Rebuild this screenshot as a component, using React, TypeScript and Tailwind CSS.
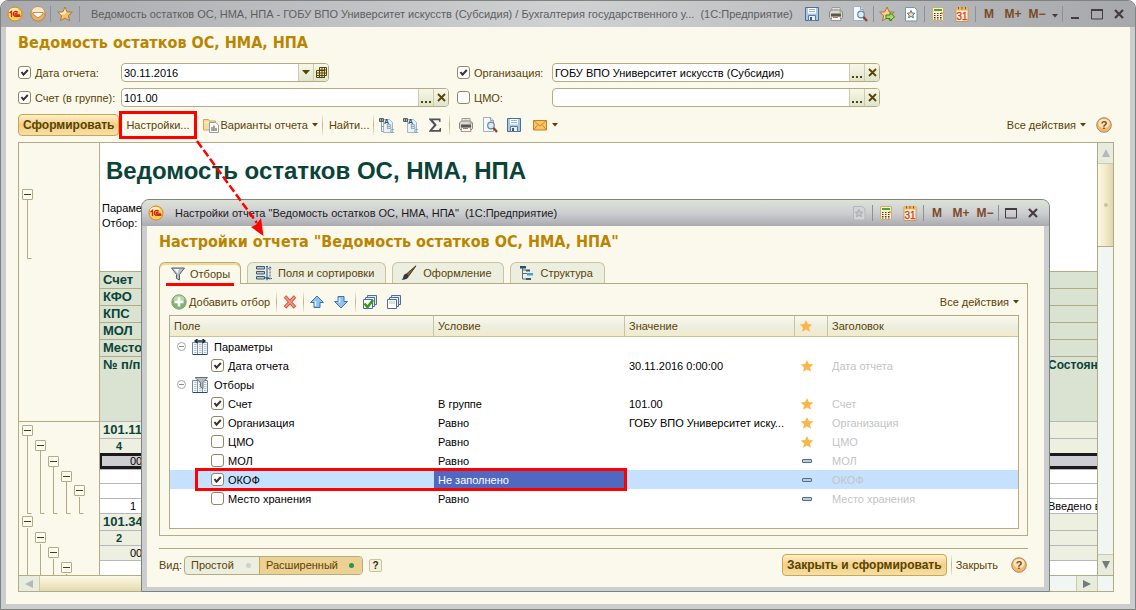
import React from "react";

type Kids = { children?: React.ReactNode };

/* ---------- icons ---------- */

function Svg({ children, w = 16, h = 16 }: Kids & { w?: number; h?: number }) {
    return (
        <svg width={w} height={h} viewBox={`0 0 ${w} ${h}`} aria-hidden="true" className="shrink-0">
            {children}
        </svg>
    );
}

const STAR = "M8 1l2.1 4.8 5.2.4-4 3.4 1.3 5.1L8 12l-4.6 2.7 1.3-5.1-4-3.4 5.2-.4z";

function LogoIcon() {
    return (
        <Svg>
            <circle cx="8" cy="8" r="7" fill="#ffd84a" stroke="#d9812c" />
            <ellipse cx="7" cy="5" rx="5" ry="3" fill="#fff3b0" />
            <path d="M2.5 7l2-1.6V11M10.8 6.4A2.5 2.5 0 1 0 9 10.4h4.5M10 8a1 1 0 1 0-.8 1h4" fill="none" stroke="#d8231c" strokeWidth="1.3" />
        </Svg>
    );
}

function RoundMenuIcon() {
    return (
        <Svg>
            <circle cx="8" cy="8" r="7.2" fill="#eeb058" stroke="#a98560" />
            <path d="M1.500 6.500a6.600 6.600 0 0 1 13 0z" fill="#fbe6bd" />
            <path d="M3 6.500h10v1.500L8 12 3 8z" fill="#fff" stroke="#a96d28" strokeWidth=".7" />
        </Svg>
    );
}

function StarIcon({ size = 16 }: { size?: number }) {
    return (
        <svg width={size} height={size} viewBox="0 0 16 16" aria-hidden="true">
            <path d={STAR} fill="#fdb54a" />
        </svg>
    );
}

function TitleStarIcon() {
    return (
        <Svg>
            <path d={STAR} fill="#fcc06a" stroke="#a9752e" strokeWidth=".9" />
            <path d="M8 3l1.200 3.500L8 8.500 4 8.500 2.500 7l4-.5z" fill="#fff0c0" />
        </Svg>
    );
}

function SaveIcon() {
    return (
        <Svg>
            <path d="M1.5 1.5h13v13h-13z" fill="#a9c8e4" stroke="#47719a" />
            <path d="M4 2h8v5.5H4z" fill="#fff" />
            <path d="M5 3.5h6M5 5.5h6" stroke="#9bb4cc" />
            <path d="M4.5 9.5h7v5h-7z" fill="#e9f0f5" stroke="#5d7b98" />
            <path d="M6 11h2v3H6z" fill="#3e5d7d" />
        </Svg>
    );
}

function PrinterIcon() {
    return (
        <Svg>
            <path d="M4 5V1.500h8V5" fill="#fff" stroke="#9a9a9a" />
            <path d="M5.500 3h5" stroke="#b6b6b6" />
            <path d="M1.500 6l2-2h9l2 2v5.500l-1.500 1.500H3l-1.500-1.500z" fill="#dcdad4" stroke="#8a877f" />
            <path d="M3 7.500h10v3H3z" fill="#5c5650" />
            <path d="M4 10.500h8l1 4H3z" fill="#fff" stroke="#8a867e" strokeWidth=".8" />
            <path d="M5 11.500h5" stroke="#d16a4a" />
            <path d="M11.500 6h2" stroke="#4fa23f" />
        </Svg>
    );
}

function PreviewIcon() {
    return (
        <Svg>
            <path d="M1.500.5h7l3 3v11h-10z" fill="#f5f9fc" stroke="#9db2c4" />
            <path d="M8.500.5v3h3" fill="#d4e2ee" stroke="#8ea5b8" />
            <circle cx="9" cy="8.500" r="3.300" fill="#d6ecf8" stroke="#6e8496" strokeWidth="1.200" />
            <path d="M11.500 11l3.500 4" stroke="#8a4a26" strokeWidth="2.400" />
        </Svg>
    );
}

function StarArrowIcon() {
    return (
        <Svg>
            <path d={STAR} fill="#fcd08a" stroke="#a4702c" strokeWidth=".9" />
            <path d="M7 9h4V6.500l4.500 4.300-4.500 4.200v-2.500H7z" fill="#a4dc6b" stroke="#3c7f1c" />
        </Svg>
    );
}

function DocStarIcon({ faded }: { faded?: boolean }) {
    const line = faded ? "#a9abae" : "#56748f";
    return (
        <Svg>
            <path d="M2.500 1.500h9l2.500 2.500v11H2.500z" fill={faded ? "#d2d4d5" : "#fff"} stroke={faded ? "#b4b6b9" : "#7892a8"} />
            <path d="M8 4.500l1.100 2.500 2.700.3-2 1.800.6 2.700L8 10.400l-2.400 1.400.6-2.700-2-1.800 2.700-.3z" fill={faded ? "#c5c7c9" : "#fbd9a0"} stroke={line} />
        </Svg>
    );
}

function CalcIcon() {
    return (
        <Svg>
            <path d="M2.500 1.500h11v13h-11z" fill="#fbeecb" stroke="#cfae74" />
            <path d="M4 3h8v2H4z" fill="#4aa43c" />
            <path d="M4 7.500h8M4 9.500h8M4 11.500h8M4 13h8" stroke="#3d3a34" strokeWidth="1.200" strokeDasharray="1.500 1.500" />
            <path d="M11 6.500h1.500V8H11z" fill="#d8501e" />
        </Svg>
    );
}

function CalendarIcon() {
    return (
        <Svg>
            <path d="M2 2h12v13.500H2z" fill="#fff6e0" stroke="#c69a5c" />
            <path d="M2 1.500h12V4.500H2z" fill="#f4b455" />
            <path d="M4.500 1v2.500M8 1v2.500M11.500 1v2.500" stroke="#8d5a22" />
            <text x="8" y="14" textAnchor="middle" fontSize="10" fill="#e0331a" stroke="#e0331a" strokeWidth=".3">31</text>
        </Svg>
    );
}

function FolderIcon() {
    return (
        <Svg>
            <path d="M.5 2.500h5l1 1.500h6v9H.5z" fill="#f7dc9c" stroke="#c9a75f" />
            <path d="M1.500 5.500h10" stroke="#fdedc2" />
            <path d="M6.500 5.500h6l3 2.500v7.500h-9z" fill="#fff" stroke="#8aa0b5" />
            <path d="M9 10v4" stroke="#5794cf" strokeWidth="1.500" />
            <path d="M11 8.500V14" stroke="#d85c3c" strokeWidth="1.500" />
            <path d="M13 11v3" stroke="#5aa94a" strokeWidth="1.500" />
        </Svg>
    );
}

function GroupIcon({ collapsed }: { collapsed?: boolean }) {
    return (
        <Svg>
            <path d="M4.500 2.500h6l3 3v10h-9z" fill="#eaf1f7" stroke="#a3b7c8" />
            <path d="M.5 1.500h4v3h-4zM.5 3h4M2.500 1.500v3" fill="none" stroke="#4a4f57" strokeWidth=".9" />
            {!collapsed && <path d="M2.500 5v9.500h2M2.500 9.500h2" fill="none" stroke="#8aa0b3" />}
            <text x="5" y="6.500" fontSize="7" fontWeight="700" fill="#1f5276">A</text>
            <text x="7.500" y="11.500" fontSize="7" fontWeight="700" fill="#8ea5b8">B</text>
            <text x="11" y="16" fontSize="6" fontWeight="700" fill="#8097a9">C</text>
        </Svg>
    );
}

function SigmaIcon() {
    return (
        <Svg>
            <path d="M2 1.500h11.500V5h-1l-.8-1.700H5.800L9.800 8l-4.500 5h6.700l1-2h1v3.800H2V14l5-6-5-5.700z" fill="#4d5257" />
        </Svg>
    );
}

function MailIcon() {
    return (
        <Svg>
            <path d="M1.500 3.500h13v9.500h-13z" fill="#fbc566" stroke="#c47f22" />
            <path d="M1.500 3.500L8 9l6.500-5.500M1.500 13L6 7.500M14.500 13L10 7.500" fill="none" stroke="#c98a34" />
        </Svg>
    );
}

function HelpIcon() {
    return (
        <Svg>
            <circle cx="8" cy="8" r="7.300" fill="#f9b765" stroke="#a08a70" />
            <ellipse cx="8" cy="6.500" rx="5.500" ry="4.500" fill="#fde6bd" />
            <text x="8" y="12" textAnchor="middle" fontSize="11" fontWeight="700" fill="#7a4a12">?</text>
        </Svg>
    );
}

function FunnelIcon() {
    return (
        <Svg>
            <path d="M1.500 2h13L9.500 8.500V14l-3-1.500v-4z" fill="#b9bfc4" stroke="#55606a" />
            <path d="M4 3h5L7.500 7.500z" fill="#f4f6f7" />
        </Svg>
    );
}

function FieldsIcon() {
    return (
        <Svg>
            <path d="M.5 1.500h8V4h-8zM.5 6.500h8V9h-8zM.5 11.500h8V14h-8z" fill="#b7cbdc" stroke="#45586a" />
            <path d="M11 14V2M9.500 12l1.500 2.500 1.500-2.500" fill="none" stroke="#2f6ea5" strokeWidth="1.200" />
            <path d="M14 14.500V2.500M12.500 4L14 1.500 15.500 4M10 1.500h3M12 13.500h4" fill="none" stroke="#45586a" strokeDasharray="2 1" />
        </Svg>
    );
}

function BrushIcon() {
    return (
        <Svg>
            <path d="M15 .8L6 8.500l2 2z" fill="#8f6a3c" stroke="#4b351b" />
            <path d="M5.500 8.500l2.500 2.300c-.5 3-3.500 4.200-7.500 4 2-1 1.500-2.500 2.200-4.200.5-1.200 1.500-2 2.800-2.100z" fill="#33373c" />
        </Svg>
    );
}

function StructureIcon() {
    return (
        <Svg>
            <path d="M3.500 3v11H8M3.500 8.500H8M3.500 5H7" fill="none" stroke="#5d6b78" />
            <path d="M1 1h6v2.500H1z" fill="#27506f" />
            <path d="M7 4.500h4v2H7zM7 13h5v2H7z" fill="#3c5a72" />
            <path d="M8 8h6v2.500H8z" fill="#4a9fd6" />
        </Svg>
    );
}

function AddIcon() {
    return (
        <Svg>
            <circle cx="8" cy="8" r="7.200" fill="#7fb56b" stroke="#8c9a86" />
            <ellipse cx="8" cy="5" rx="5.500" ry="3.500" fill="#b5d8a6" />
            <path d="M8 3.500v9M3.500 8h9" stroke="#fff" strokeWidth="2.600" />
        </Svg>
    );
}

function DeleteIcon() {
    return (
        <Svg>
            <path d="M3 2.500l10 11M13 2.500l-10 11" stroke="#d0503c" strokeWidth="3.400" />
            <path d="M3.400 3l9.200 10M12.600 3L3.400 13" stroke="#f69a88" strokeWidth="1.800" />
        </Svg>
    );
}

function ArrowIcon({ down }: { down?: boolean }) {
    return (
        <Svg>
            <path
                d={down ? "M5 2.500h6v5h3.500L8 14 1.500 7.500H5z" : "M5 13.500h6v-5h3.500L8 2 1.500 8.500H5z"}
                fill="#8fc3ee"
                stroke="#3d74a8"
            />
            <path d={down ? "M6.500 4v5" : "M6.500 12V7"} stroke="#d9edfb" strokeWidth="1.500" />
        </Svg>
    );
}

function StackIcon({ checked }: { checked?: boolean }) {
    return (
        <Svg>
            <path d="M5.500 1.500h9v9h-9z" fill="#dfe9f2" stroke="#4e6f90" />
            <path d="M3.500 3.500h9v9h-9z" fill="#edf3f8" stroke="#4e6f90" />
            <path d="M1.500 5.500h9v9h-9z" fill="#fff" stroke="#4e6f90" />
            {checked ? <path d="M2.500 9.500l3 3.500L11 6" fill="none" stroke="#2f9a1e" strokeWidth="2.600" /> : <path d="M3 7h6v3H3z" fill="#d3dfe9" />}
        </Svg>
    );
}

function TableGlyph({ filter }: { filter?: boolean }) {
    return (
        <Svg>
            <path d="M.5 3.500h15v12H.5z" fill="#f4f8fb" stroke="#6f889c" />
            <path d="M1 15.500h14" stroke="#33475a" />
            <path d="M5.500 4v11M10.500 4v11" stroke="#7f96a8" />
            <path d="M2 5.500h2.500M7 5.500h2.500M12 5.500h2.500M2 7.500h2.500M7 7.500h2.500M12 7.500h2.500M2 9.500h2.500M7 9.500h2.500M12 9.500h2.500M2 11.500h2.500M7 11.500h2.500M12 11.500h2.500M2 13.500h2.500M7 13.500h2.500M12 13.500h2.500" stroke="#b3c1cc" />
            {filter ? (
                <path d="M3 .5h12.500L11 5.500v6l-2.500-1.500V5.500z" fill="#b3bac0" stroke="#6a747d" />
            ) : (
                <path d="M3 2h10M5.500 0L3 2l2.500 2M10.500 0L13 2l-2.500 2" fill="none" stroke="#1d2b38" strokeWidth="1.300" />
            )}
        </Svg>
    );
}

function Caret({ className = "text-[#594304]" }: { className?: string }) {
    return (
        <svg width="6" height="4" viewBox="0 0 6 4" aria-hidden="true" className={className}>
            <path d="M0 0h6L3 3.500z" fill="currentColor" />
        </svg>
    );
}

function MinimizeIcon() {
    return <Svg><path d="M4 12h8" stroke="#463a40" strokeWidth="2" /></Svg>;
}

function MaximizeIcon() {
    return <Svg><path d="M2.500 4h11v9h-11z" fill="none" stroke="#463a40" /><path d="M2 4h12" stroke="#463a40" strokeWidth="2" /></Svg>;
}

function CloseIcon() {
    return <Svg><path d="M4 4l8 8M12 4l-8 8" stroke="#463a40" strokeWidth="2.200" /></Svg>;
}

/* ---------- small controls ---------- */

function IconButton({ label, children, className = "w-6" }: Kids & { label: string; className?: string }) {
    return (
        <button type="button" aria-label={label} className={`flex h-5 shrink-0 items-center justify-center ${className}`}>
            {children}
        </button>
    );
}

function BarSeparator() {
    return (
        <div className="flex w-[3px] shrink-0 justify-center">
            <div className="h-4 w-px bg-[#8e9093]" />
        </div>
    );
}

function ToolSeparator({ className = "mx-px" }: { className?: string }) {
    return <div className={`h-5 w-px shrink-0 bg-gradient-to-b from-[#f0ecd6] via-[#b9b497] to-[#f0ecd6] ${className}`} />;
}

function MemoryButton({ children }: Kids) {
    return (
        <button type="button" className="w-6 shrink-0 text-center text-xs font-bold text-[#7b4a26]">
            {children}
        </button>
    );
}

function Check({ label, checked, id }: { label: string; checked: boolean; id: string }) {
    return (
        <span className="inline-flex items-center gap-1">
            <span className="relative inline-flex size-[13px]">
                <input id={id} type="checkbox" defaultChecked={checked} className="peer size-[13px] appearance-none rounded-[3px] border border-[#8e8768] bg-white" />
                <svg width="13" height="13" viewBox="0 0 13 13" aria-hidden="true" className="pointer-events-none absolute inset-0 hidden peer-checked:block">
                    <path d="M3.500 6l2 2.600L9.800 4" fill="none" stroke="#3a3330" strokeWidth="2" />
                </svg>
            </span>
            <label htmlFor={id}>{label}</label>
        </span>
    );
}

function FieldButton({ label, children }: Kids & { label: string }) {
    return (
        <button type="button" aria-label={label} className="flex w-[15px] shrink-0 items-center justify-center border-l border-[#cfcaa8] bg-gradient-to-b from-[#f8f7e6] to-[#dfe5cd] font-bold text-[#594304]">
            {children}
        </button>
    );
}

function Field({ label, value, kind, className }: { label: string; value: string; kind: "date" | "ref"; className: string }) {
    return (
        <div className={`flex h-[19px] overflow-hidden rounded-[4px] border border-[#b3ab84] bg-white ${className}`}>
            <input type="text" aria-label={label} defaultValue={value} className="min-w-0 flex-1 px-0.5 text-black outline-none" />
            {kind === "date" ? (
                <>
                    <FieldButton label="Открыть список">
                        <svg width="8" height="5" viewBox="0 0 8 5" aria-hidden="true">
                            <path d="M0 0h8L4 4.500z" fill="#594304" />
                        </svg>
                    </FieldButton>
                    <FieldButton label="Календарь">
                        <svg width="11" height="11" viewBox="0 0 11 11" aria-hidden="true">
                            <path d="M3.500.5h7v8h-2M.5 3.500h8v7h-8zM3.500.5v10M6 .5v10M.5 6h10M.5 8.500h8M8.500 .5v10M3.500 3h7" fill="none" stroke="#594304" />
                        </svg>
                    </FieldButton>
                </>
            ) : (
                <>
                    <FieldButton label="Выбрать">
                        <svg width="11" height="12" viewBox="0 0 11 12" aria-hidden="true">
                            <path d="M0 9h2v2H0zM4 9h2v2H4zM8 9h2v2H8z" fill="#594304" />
                        </svg>
                    </FieldButton>
                    <FieldButton label="Очистить">
                        <svg width="9" height="9" viewBox="0 0 9 9" aria-hidden="true">
                            <path d="M1 1l7 7M8 1L1 8" stroke="#594304" strokeWidth="1.800" />
                        </svg>
                    </FieldButton>
                </>
            )}
        </div>
    );
}

function PrimaryButton({ children }: Kids) {
    return (
        <button type="button" className="h-[22px] shrink-0 rounded-[4px] border border-[#c9a74c] bg-gradient-to-b from-[#fdf0cb] via-[#f2cf85] to-[#f6dfa6] px-1 text-xs font-bold text-[#594304]">
            {children}
        </button>
    );
}

function AllActions() {
    return (
        <button type="button" className="flex shrink-0 items-center gap-1 whitespace-nowrap">
            Все действия <Caret />
        </button>
    );
}

/* ---------- report sheet ---------- */

const headerRows = [
    { h: "h-[17px]", text: "Счет" },
    { h: "h-[17px]", text: "КФО" },
    { h: "h-[17px]", text: "КПС" },
    { h: "h-[17px]", text: "МОЛ" },
    { h: "h-[17px]", text: "Место хранения" },
    { h: "h-[65px]", text: "№ п/п", last: "Состоян" },
];

type BodyRow = { h: string; level?: string; text?: string; cell: string; last?: string; selected?: boolean };

const bodyRows: BodyRow[] = [
    { h: "h-[17px]", level: "pl-[3px]", text: "101.11", cell: "bg-[#edefe1] pl-[3px] text-[13px] font-bold text-[#0a4438]" },
    { h: "h-[15px]", level: "pl-[16px]", text: "4", cell: "bg-[#edefe1] pl-4 text-[11px] font-bold text-[#0a4438]" },
    { h: "h-[16px]", level: "pl-[29px]", text: "000", cell: "bg-[#cdced1] border-l-2 pl-7 text-[11px]", selected: true },
    { h: "h-[14px]", level: "pl-[42px]", cell: "" },
    { h: "h-[15px]", level: "pl-[55px]", cell: "" },
    { h: "h-[15px]", text: "1", cell: "pl-[30px] text-[11px]", last: "Введено в" },
    { h: "h-[17px]", level: "pl-[3px]", text: "101.34", cell: "bg-[#edefe1] pl-[3px] text-[13px] font-bold text-[#0a4438]" },
    { h: "h-[15px]", level: "pl-[16px]", text: "2", cell: "bg-[#edefe1] pl-4 text-[11px] font-bold text-[#0a4438]" },
    { h: "h-[15px]", level: "pl-[29px]", text: "000", cell: "bg-[#edefe1] pl-[30px] text-[11px]" },
    { h: "h-[15px]", level: "pl-[42px]", cell: "" },
];

function GroupToggle() {
    return (
        <button type="button" aria-label="Свернуть группу" className="flex size-[11px] items-center justify-center rounded-[1px] border border-[#b3ab84] bg-[#fdfcf2]">
            <span className="h-px w-[7px] bg-[#4a3c10]" />
        </button>
    );
}

function GroupGutter() {
    return (
        <div className="relative w-[81px] shrink-0 border-r border-[#b3ab84]">
            <svg width="80" height="432" viewBox="0 0 80 432" aria-hidden="true" className="absolute left-0 top-0">
                <path
                    d="M8.500 57v58.500h4M8.500 293v77.500h4M21.500 308v62.500h4M34.500 324v46.500h4M47.500 339v31.500h4M60.500 354v16.500h4M8.500 385v47M21.500 401v31M34.500 416v16M47.500 431v1"
                    fill="none"
                    stroke="#b3ab84"
                />
            </svg>
            <div className="relative h-[278px] pl-[3px] pt-[46px]">
                <GroupToggle />
            </div>
            {bodyRows.map((row, i) => (
                <div key={i} className={`relative flex items-center ${row.h} ${row.level ?? ""} ${i === 0 ? "border-t border-[#b3ab84]" : ""}`}>
                    {row.level && <GroupToggle />}
                </div>
            ))}
        </div>
    );
}

function ReportSheet() {
    return (
        <div className="min-w-0 flex-1 overflow-hidden bg-white text-black">
            <div className="h-32 pt-3">
                <h2 className="pl-1.5 text-2xl font-bold whitespace-nowrap text-[#0a4438]">Ведомость остатков ОС, НМА, НПА</h2>
                <div className="pl-0.5 pt-3.5 text-[11px] leading-[15px]">
                    <p>Параметры:</p>
                    <p>Отбор:</p>
                </div>
            </div>
            <table className="w-full table-fixed border-separate border-spacing-0 text-left">
                <colgroup>
                    <col />
                    <col className="w-[49px]" />
                </colgroup>
                <thead>
                    {headerRows.map((row) => (
                        <tr key={row.text} className={row.h}>
                            <th className="overflow-hidden border-t border-[#b3ab84] bg-[#dae2d2] py-0 pl-[3px] align-top text-[13px] leading-4 whitespace-nowrap text-[#0a4438]">{row.text}</th>
                            <th className="overflow-hidden border-t border-[#b3ab84] bg-[#dae2d2] p-0 align-top text-xs leading-4 whitespace-nowrap text-[#0a4438]">{row.last}</th>
                        </tr>
                    ))}
                </thead>
                <tbody>
                    {bodyRows.map((row, i) => {
                        const line = row.selected ? "border-y-[3px] border-[#1c181c]" : "border-t border-[#b5b7bb]";
                        const tint = row.cell.includes("bg-[#edefe1]") ? "bg-[#edefe1]" : row.selected ? "bg-[#cdced1]" : "";
                        return (
                            <tr key={i} className={row.h}>
                                <td className={`overflow-hidden py-0 leading-[10px] whitespace-nowrap ${line} ${row.cell}`}>{row.text}</td>
                                <td className={`overflow-hidden p-0 text-[11px] leading-[10px] whitespace-nowrap ${line} ${tint}`}>{row.last}</td>
                            </tr>
                        );
                    })}
                </tbody>
            </table>
        </div>
    );
}

function ScrollArrow({ d, className, label, fill }: { d: string; className: string; label: string; fill: string }) {
    return (
        <button type="button" aria-label={label} className={`flex shrink-0 items-center justify-center border-[#cfcaa8] bg-[#e8ecdc] ${className}`}>
            <svg width="8" height="8" viewBox="0 0 8 8" aria-hidden="true">
                <path d={d} fill={fill} />
            </svg>
        </button>
    );
}

function Report() {
    return (
        <div className="border border-[#b3ab84]">
            <div className="flex">
                <GroupGutter />
                <ReportSheet />
                <div className="flex w-4 shrink-0 flex-col border-l border-[#b3ab84] bg-[#f2f6f2]">
                    <ScrollArrow label="Вверх" d="M4 0l4 8H0z" fill="#b5b7bb" className="h-[21px] border-b" />
                    <div className="flex h-[83px] items-center justify-center border-b border-[#b3ab84] bg-gradient-to-r from-[#faf7e4] via-[#f3ebc8] to-[#ddd6ae]">
                        <span className="size-1 rounded-full bg-[#c9c3a0]" />
                    </div>
                    <div className="flex-1" />
                    <ScrollArrow label="Вниз" d="M0 0h8L4 8z" fill="#77797d" className="h-[21px] border-t" />
                </div>
            </div>
            <div className="flex h-4 border-t border-[#b3ab84] bg-[#f2f6f2]">
                <ScrollArrow label="Влево" d="M8 0v8L0 4z" fill="#b5b7bb" className="w-[21px] border-r" />
                <div className="w-1/2 border-r border-[#b3ab84] bg-gradient-to-b from-[#faf7e4] via-[#f3ebc8] to-[#e0dab4]" />
                <div className="flex-1" />
                <ScrollArrow label="Вправо" d="M0 0l8 4-8 4z" fill="#77797d" className="w-[22px] border-x" />
                <div className="w-[15px]" />
            </div>
        </div>
    );
}

/* ---------- settings dialog ---------- */

type FilterRow = {
    field: string;
    group?: "params" | "filters";
    checked?: boolean;
    condition?: string;
    value?: string;
    pinned?: boolean;
    selected?: boolean;
};

const filterRows: FilterRow[] = [
    { field: "Параметры", group: "params" },
    { field: "Дата отчета", checked: true, value: "30.11.2016 0:00:00", pinned: true },
    { field: "Отборы", group: "filters" },
    { field: "Счет", checked: true, condition: "В группе", value: "101.00", pinned: true },
    { field: "Организация", checked: true, condition: "Равно", value: "ГОБУ ВПО Университет иску...", pinned: true },
    { field: "ЦМО", checked: false, condition: "Равно", pinned: true },
    { field: "МОЛ", checked: false, condition: "Равно" },
    { field: "ОКОФ", checked: true, condition: "Не заполнено", selected: true },
    { field: "Место хранения", checked: false, condition: "Равно" },
];

function FilterTable() {
    const head = "border-b border-r border-[#c9c3a0] py-0 pl-1 font-normal last:border-r-0";
    return (
        <div className="border border-[#b3ab84] bg-white pb-5">
            <table className="w-full table-fixed border-separate border-spacing-0 text-left text-black">
                <colgroup>
                    <col className="w-[264px]" />
                    <col className="w-[191px]" />
                    <col className="w-[170px]" />
                    <col className="w-[33px]" />
                    <col />
                </colgroup>
                <thead>
                    <tr className="h-[21px] bg-gradient-to-b from-[#fbf9ec] via-[#eceee0] to-[#f3ebc8] text-[#594304]">
                        <th className={head}>Поле</th>
                        <th className={head}>Условие</th>
                        <th className={head}>Значение</th>
                        <th className={head} aria-label="Избранное"><StarIcon size={14} /></th>
                        <th className={head}>Заголовок</th>
                    </tr>
                </thead>
                <tbody>
                    {filterRows.map((row) => (
                        <tr key={row.field} className={`h-[19px] ${row.selected ? "bg-[#c6e1ff]" : ""}`}>
                            <td className="relative p-0">
                                {row.group ? (
                                    <span className="flex items-center pl-[7px]">
                                        <button type="button" aria-label={`Свернуть ${row.field}`} className="mr-1.5 flex size-[9px] items-center justify-center rounded-full border border-[#a5a5a5]">
                                            <span className="h-px w-[5px] bg-[#8a8a8a]" />
                                        </button>
                                        <TableGlyph filter={row.group === "filters"} />
                                        <span className="pl-1.5">{row.field}</span>
                                    </span>
                                ) : (
                                    <span className="flex items-center pl-[41px]">
                                        <Check id={`row-${row.field}`} label={row.field} checked={!!row.checked} />
                                    </span>
                                )}
                                {row.selected && <span className="pointer-events-none absolute -top-0.5 left-[25px] z-10 h-[23px] w-[432px] border-[3px] border-[#ff0000]" />}
                            </td>
                            <td className={`py-0 pl-1 ${row.selected ? "bg-[#5168c0] text-white" : ""}`}>{row.condition}</td>
                            <td className="py-0 pl-1 whitespace-nowrap">{row.value}</td>
                            <td className="py-0 pl-[5px]">
                                {row.group ? null : row.pinned ? (
                                    <StarIcon size={14} />
                                ) : (
                                    <span className="ml-0.5 block h-1 w-2.5 rounded-[1px] border border-[#4f6f8c] bg-[#bccbd6]" />
                                )}
                            </td>
                            <td className="py-0 pl-1 text-[#c3c4c4]">{row.group ? "" : row.field}</td>
                        </tr>
                    ))}
                </tbody>
            </table>
        </div>
    );
}

function Tab({ icon, children, active }: Kids & { icon: React.ReactNode; active?: boolean }) {
    return (
        <button
            type="button"
            role="tab"
            aria-selected={!!active}
            className={
                active
                    ? "relative -mb-px flex h-[22px] items-center gap-1 rounded-t-[6px] border border-b-0 border-[#b3ab84] bg-[#fbf9ec] px-2.5 shadow-[inset_0_2px_0_#fbd58c]"
                    : "flex h-[21px] items-center gap-1.5 rounded-t-[6px] border border-b-0 border-[#c9c3a0] bg-[#eceee0] pl-2 pr-[11px]"
            }
        >
            {icon}
            {children}
            {active && <span className="absolute -bottom-0.5 left-1.5 z-10 h-[3px] w-[68px] bg-[#ff0000]" />}
        </button>
    );
}

function SettingsDialog() {
    return (
        <section
            role="dialog"
            aria-label="Настройки отчета"
            className="absolute left-[140px] right-[85px] top-[198px] overflow-hidden rounded-t-[8px] border border-[#7e837e] bg-[#cbcdcf]"
        >
            <header className="flex h-[26px] items-center bg-gradient-to-b from-[#dde3d6] via-[#cdced1] to-[#a9abae] pl-1.5 pr-[5px] text-[#1c181c]">
                <LogoIcon />
                <span className="flex-1 truncate pl-[11px]">{'Настройки отчета "Ведомость остатков ОС, НМА, НПА"\u00a0 (1С:Предприятие)'}</span>
                <IconButton label="В избранное"><DocStarIcon faded /></IconButton>
                <BarSeparator />
                <IconButton label="Калькулятор"><CalcIcon /></IconButton>
                <IconButton label="Календарь"><CalendarIcon /></IconButton>
                <BarSeparator />
                <MemoryButton>M</MemoryButton>
                <MemoryButton>M+</MemoryButton>
                <MemoryButton>M−</MemoryButton>
                <BarSeparator />
                <IconButton label="Развернуть" className="w-[22px]"><MaximizeIcon /></IconButton>
                <IconButton label="Закрыть" className="w-[22px]"><CloseIcon /></IconButton>
            </header>
            <div className="mx-[5px] mb-1 bg-[#fbf9ec] px-3 pt-1.5">
                <h2 className="font-['DejaVu_Sans_Condensed','DejaVu_Sans',sans-serif] text-base leading-5 font-bold text-[#b98500]">
                    Настройки отчета "Ведомость остатков ОС, НМА, НПА"
                </h2>
                <div role="tablist" className="flex items-end gap-1.5 pt-2.5">
                    <Tab active icon={<FunnelIcon />}>Отборы</Tab>
                    <Tab icon={<FieldsIcon />}>Поля и сортировки</Tab>
                    <Tab icon={<BrushIcon />}>Оформление</Tab>
                    <Tab icon={<StructureIcon />}>Структура</Tab>
                </div>
                <div className="mr-1 border border-[#b3ab84] pb-1.5 pl-[9px] pr-2">
                    <div className="flex h-[31px] items-center pt-1">
                        <button type="button" className="flex items-center gap-0.5 pl-0.5">
                            <AddIcon />
                            Добавить отбор
                        </button>
                        <ToolSeparator className="ml-1.5 mr-px" />
                        <IconButton label="Удалить"><DeleteIcon /></IconButton>
                        <ToolSeparator />
                        <IconButton label="Вверх"><ArrowIcon /></IconButton>
                        <IconButton label="Вниз"><ArrowIcon down /></IconButton>
                        <ToolSeparator className="mx-0.5" />
                        <IconButton label="Установить флажки"><StackIcon checked /></IconButton>
                        <IconButton label="Снять флажки"><StackIcon /></IconButton>
                        <div className="flex-1" />
                        <AllActions />
                    </div>
                    <FilterTable />
                </div>
                <footer className="mr-1 mt-3 flex h-[39px] items-center border-t border-[#b3ab84] pb-1.5">
                    <span className="pr-0.5">Вид:</span>
                    <div className="flex h-[19px] rounded-[4px] border border-[#b3ab84] bg-[#eceee0]">
                        <button type="button" aria-pressed="false" className="flex w-[74px] items-center justify-between pl-1.5 pr-2">
                            Простой <span className="size-[5px] rounded-full bg-[#cfd1cc]" />
                        </button>
                        <button type="button" aria-pressed="true" className="flex w-[103px] items-center justify-between rounded-r-[3px] border-l border-[#c9a74c] bg-[#ecd193] pl-1.5 pr-2">
                            Расширенный <span className="size-[5px] rounded-full bg-[#1d9a5a]" />
                        </button>
                    </div>
                    <button type="button" aria-label="Подсказка" className="ml-1.5 h-[13px] w-[13px] rounded-[2px] border border-[#c9c3a0] bg-[#f5f1d9] text-[10px] leading-[11px] font-bold text-[#2f2a1c]">?</button>
                    <div className="flex-1" />
                    <PrimaryButton>Закрыть и сформировать</PrimaryButton>
                    <ToolSeparator className="mx-1" />
                    <button type="button" className="pr-3">Закрыть</button>
                    <IconButton label="Справка" className="w-[18px]"><HelpIcon /></IconButton>
                </footer>
            </div>
        </section>
    );
}

/* ---------- main window ---------- */

function TitleBar() {
    return (
        <header className="flex h-[26px] items-center bg-gradient-to-r from-[#a9aaad] via-[#cfd1d3] to-[#a6a8ab] pl-1.5 pr-[5px]">
            <LogoIcon />
            <IconButton label="Главное меню" className="ml-1 w-[22px]"><RoundMenuIcon /></IconButton>
            <BarSeparator />
            <IconButton label="Избранное" className="w-[26px]"><TitleStarIcon /></IconButton>
            <BarSeparator />
            <span className="min-w-0 flex-1 truncate pl-2.5 text-[#5d5e61]">
                {"Ведомость остатков ОС, НМА, НПА - ГОБУ ВПО Университет искусств (Субсидия) / Бухгалтерия государственного у...\u00a0 (1С:Предприятие)"}
            </span>
            <IconButton label="Сохранить"><SaveIcon /></IconButton>
            <IconButton label="Печать"><PrinterIcon /></IconButton>
            <IconButton label="Предварительный просмотр"><PreviewIcon /></IconButton>
            <BarSeparator />
            <IconButton label="Добавить в избранное"><StarArrowIcon /></IconButton>
            <IconButton label="Ссылка"><DocStarIcon /></IconButton>
            <BarSeparator />
            <IconButton label="Калькулятор"><CalcIcon /></IconButton>
            <IconButton label="Календарь"><CalendarIcon /></IconButton>
            <BarSeparator />
            <MemoryButton>M</MemoryButton>
            <MemoryButton>M+</MemoryButton>
            <MemoryButton>M−</MemoryButton>
            <IconButton label="Еще" className="w-3 pt-1"><Caret className="text-[#463a40]" /></IconButton>
            <BarSeparator />
            <IconButton label="Свернуть" className="w-[22px]"><MinimizeIcon /></IconButton>
            <IconButton label="Развернуть" className="w-[22px]"><MaximizeIcon /></IconButton>
            <IconButton label="Закрыть" className="w-[22px]"><CloseIcon /></IconButton>
        </header>
    );
}

function Toolbar() {
    return (
        <div className="flex h-[30px] items-center">
            <PrimaryButton>Сформировать</PrimaryButton>
            <button type="button" className="h-7 border-[3px] border-[#ff0000] px-1">Настройки...</button>
            <button type="button" className="ml-1.5 flex items-center gap-0.5">
                <FolderIcon />
                Варианты отчета
                <span className="pl-0.5"><Caret /></span>
            </button>
            <ToolSeparator className="ml-1 mr-1.5" />
            <button type="button">Найти...</button>
            <ToolSeparator className="ml-1 mr-px" />
            <IconButton label="Развернуть группы"><GroupIcon /></IconButton>
            <IconButton label="Свернуть группы"><GroupIcon collapsed /></IconButton>
            <IconButton label="Сумма"><SigmaIcon /></IconButton>
            <ToolSeparator className="ml-0.5 mr-1" />
            <IconButton label="Печать"><PrinterIcon /></IconButton>
            <IconButton label="Просмотр"><PreviewIcon /></IconButton>
            <IconButton label="Сохранить"><SaveIcon /></IconButton>
            <button type="button" aria-label="Отправить" className="ml-1.5 flex items-center gap-1">
                <MailIcon />
                <Caret />
            </button>
            <div className="flex-1" />
            <AllActions />
            <IconButton label="Справка" className="ml-2 w-[20px]"><HelpIcon /></IconButton>
        </div>
    );
}

function Filters() {
    return (
        <div className="flex gap-2">
            <div className="grid grid-cols-[103px_328px] gap-y-1.5">
                <Check id="date" label="Дата отчета:" checked />
                <Field label="Дата отчета" value="30.11.2016" kind="date" className="w-[208px]" />
                <Check id="account" label="Счет (в группе):" checked />
                <Field label="Счет" value="101.00" kind="ref" className="w-full" />
            </div>
            <div className="grid grid-cols-[95px_328px] gap-y-1.5">
                <Check id="org" label="Организация:" checked />
                <Field label="Организация" value="ГОБУ ВПО Университет искусств (Субсидия)" kind="ref" className="w-full" />
                <Check id="cmo" label="ЦМО:" checked={false} />
                <Field label="ЦМО" value="" kind="ref" className="w-full" />
            </div>
        </div>
    );
}

export default function App() {
    return (
        <div className="relative flex min-h-screen flex-col overflow-hidden rounded-t-[8px] border border-[#7e837e] bg-[#cbcdcf] font-['Liberation_Sans',Arial,sans-serif] text-[11px] leading-4 text-[#594304]">
            <TitleBar />
            <main className="mx-[5px] mb-[5px] flex-1 bg-[#fbf9ec] pb-3 pl-3 pr-4 pt-1.5">
                <h1 className="font-['DejaVu_Sans_Condensed','DejaVu_Sans',sans-serif] text-base leading-5 font-bold text-[#b98500]">Ведомость остатков ОС, НМА, НПА</h1>
                <div className="pt-2.5">
                    <Filters />
                </div>
                <div className="pt-[3px]">
                    <Toolbar />
                </div>
                <div className="pt-0.5">
                    <Report />
                </div>
            </main>
            <SettingsDialog />
            <svg width="80" height="110" viewBox="0 0 80 110" aria-hidden="true" className="pointer-events-none absolute left-[190px] top-[135px]">
                <path d="M6 5l60 82" stroke="#ff0000" strokeWidth="2.500" strokeDasharray="8 3" />
                <path d="M72.500 100L60 91l4.500-2 2-2 3.500-5z" fill="#ff0000" />
            </svg>
        </div>
    );
}
